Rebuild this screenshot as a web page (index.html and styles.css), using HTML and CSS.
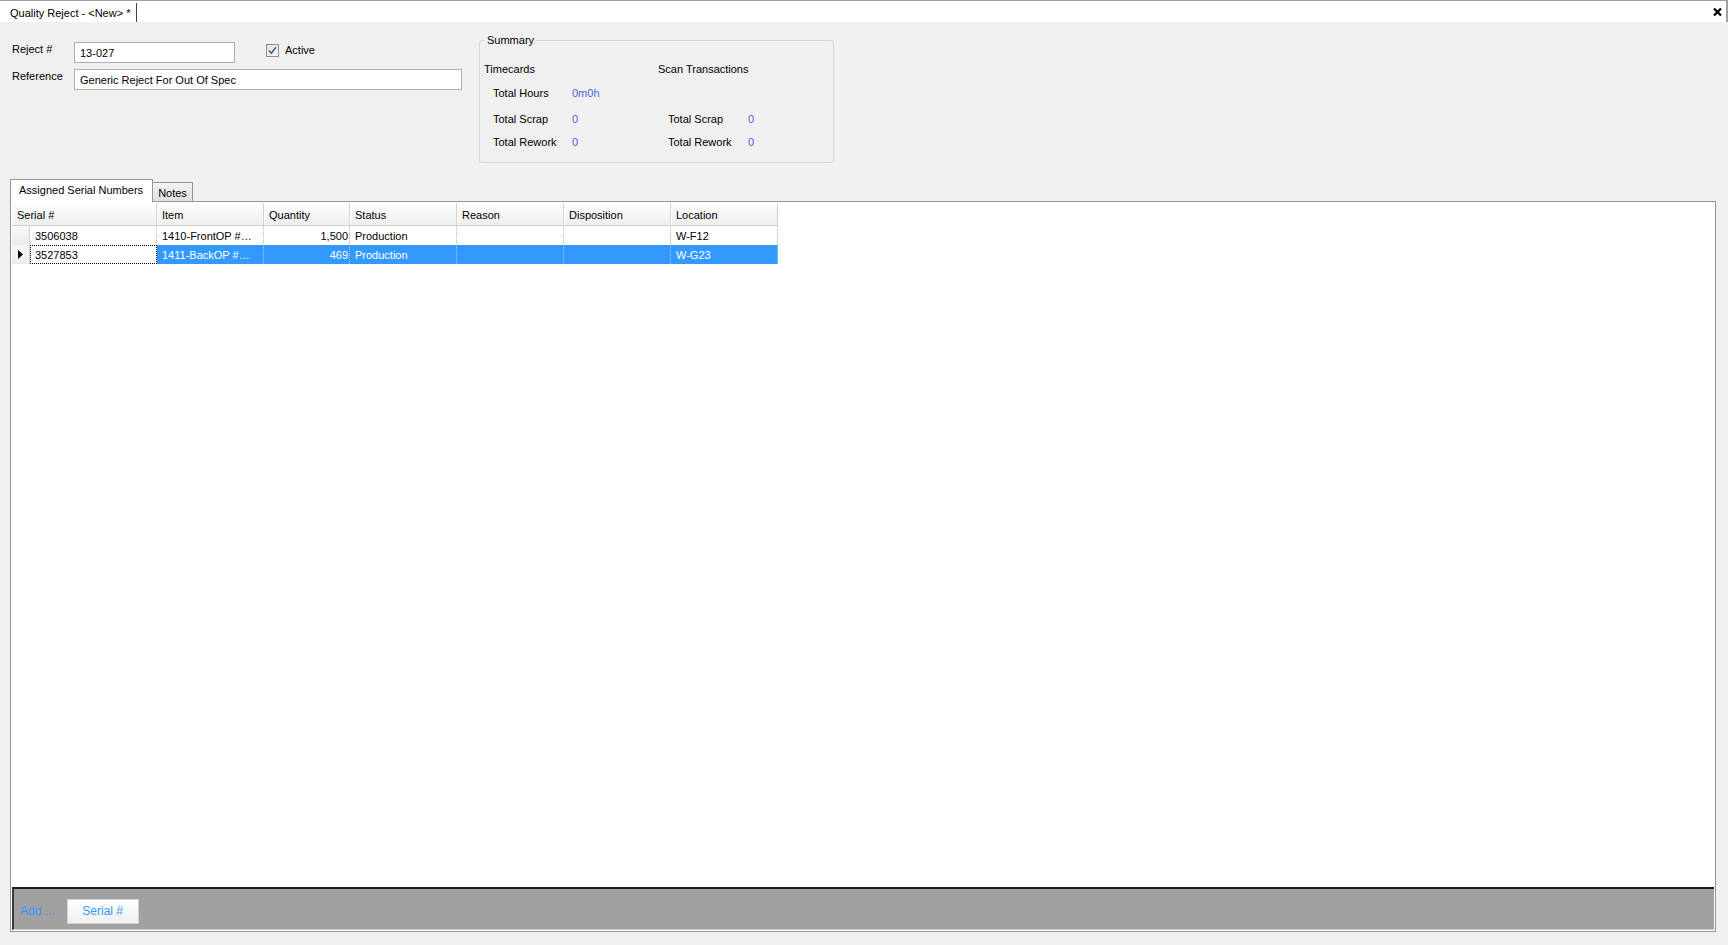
FILE: index.html
```html
<!DOCTYPE html>
<html>
<head>
<meta charset="utf-8">
<title>Quality Reject</title>
<link rel="stylesheet" href="styles.css">
</head>
<body>
<div class="window">
  <div class="titlebar">
    <div class="doc-tab">Quality Reject - &lt;New&gt; *</div>
    <div class="close">
      <svg width="9" height="8" viewBox="0 0 9 8"><path d="M1 0.5 L8 7.5 M8 0.5 L1 7.5" stroke="#000" stroke-width="2.2" fill="none"/></svg>
    </div>
  </div>

  <div class="top">
    <div class="form">
      <div class="form-row">
        <label class="field-label">Reject #</label>
        <input class="field field-short" type="text" value="13-027">
        <div class="check">
          <span class="checkbox">
            <svg width="13" height="13" viewBox="0 0 13 13">
              <defs><linearGradient id="cbg" x1="0" y1="0" x2="1" y2="1"><stop offset="0" stop-color="#dcdcdc"/><stop offset="1" stop-color="#fbfbfb"/></linearGradient></defs>
              <rect x="0.5" y="0.5" width="12" height="12" fill="url(#cbg)" stroke="#8f8f8f"/>
              <path d="M3 6.5 L5.3 9.2 L10 3.2" stroke="#4a5e8c" stroke-width="1.6" fill="none"/>
            </svg>
          </span>
          <span class="check-text">Active</span>
        </div>
      </div>
      <div class="form-row">
        <label class="field-label">Reference</label>
        <input class="field field-long" type="text" value="Generic Reject For Out Of Spec">
      </div>
    </div>

    <fieldset class="summary">
      <legend>Summary</legend>
      <div class="summary-cols">
        <div class="sum-col sum-col-left">
          <div class="sum-head">Timecards</div>
          <div class="sum-row r-hours"><span class="sum-label">Total Hours</span><span class="sum-val">0m0h</span></div>
          <div class="sum-row r-scrap"><span class="sum-label">Total Scrap</span><span class="sum-val">0</span></div>
          <div class="sum-row r-rework"><span class="sum-label">Total Rework</span><span class="sum-val">0</span></div>
        </div>
        <div class="sum-col sum-col-right">
          <div class="sum-head">Scan Transactions</div>
          <div class="sum-row r-hours"></div>
          <div class="sum-row r-scrap"><span class="sum-label">Total Scrap</span><span class="sum-val">0</span></div>
          <div class="sum-row r-rework"><span class="sum-label">Total Rework</span><span class="sum-val">0</span></div>
        </div>
      </div>
    </fieldset>
  </div>

  <div class="tabs">
    <div class="tab tab-active">Assigned Serial Numbers</div>
    <div class="tab tab-inactive">Notes</div>
  </div>

  <div class="panel">
    <div class="grid-area">
      <div class="grid">
        <div class="gh gh-first">Serial #</div>
        <div class="gh">Item</div>
        <div class="gh">Quantity</div>
        <div class="gh">Status</div>
        <div class="gh">Reason</div>
        <div class="gh">Disposition</div>
        <div class="gh">Location</div>

        <div class="rh"></div>
        <div class="gc gc-serial">3506038</div>
        <div class="gc">1410-FrontOP #…</div>
        <div class="gc num">1,500</div>
        <div class="gc">Production</div>
        <div class="gc"></div>
        <div class="gc"></div>
        <div class="gc">W-F12</div>

        <div class="rh rh-current">
          <svg width="5" height="9" viewBox="0 0 5 9"><path d="M0 0 L5 4.5 L0 9 Z" fill="#000"/></svg>
        </div>
        <div class="gc gc-serial focus">3527853</div>
        <div class="gc sel">1411-BackOP #…</div>
        <div class="gc sel num">469</div>
        <div class="gc sel">Production</div>
        <div class="gc sel"></div>
        <div class="gc sel"></div>
        <div class="gc sel">W-G23</div>
      </div>
    </div>
    <div class="toolbar">
      <span class="add-label">Add ...</span>
      <button class="tb-btn" type="button">Serial #</button>
    </div>
  </div>
</div>
</body>
</html>
```

FILE: styles.css
```css
html, body {
  margin: 0;
  padding: 0;
}

body {
  background: #f0f0f0;
  font-family: "Liberation Sans", Arial, sans-serif;
  font-size: 11px;
  color: #000;
}

.window {
  width: 1728px;
  height: 945px;
  overflow: hidden;
}

/* ---------- title strip ---------- */
.titlebar {
  height: 22px;
  box-sizing: border-box;
  border-top: 1px solid #a0a0a0;
  border-right: 2px solid #a0a0a0;
  background: #fff;
  display: flex;
  justify-content: space-between;
  align-items: flex-start;
}

.doc-tab {
  margin-top: 2px;
  height: 19px;
  line-height: 20px;
  padding: 0 6px 0 10px;
  border-right: 1px solid #404040;
  white-space: nowrap;
}

.close {
  margin: 7px 4px 0 0;
  width: 9px;
  height: 8px;
}

.close svg {
  display: block;
}

/* ---------- top form area ---------- */
.top {
  height: 157px;
  display: flex;
  align-items: flex-start;
}

.form {
  width: 450px;
  padding: 20px 0 0 12px;
}

.form-row {
  display: flex;
  align-items: flex-start;
}

.form-row + .form-row {
  margin-top: 6px;
}

.field-label {
  width: 62px;
  line-height: 14px;
  flex: none;
}

.field {
  height: 21px;
  box-sizing: border-box;
  border: 1px solid #abadb3;
  margin: 0;
  padding: 0 0 0 5px;
  font: inherit;
  color: #000;
  background: #fff;
  outline: none;
}

.field-short {
  width: 161px;
}

.field-long {
  width: 388px;
}

.check {
  display: flex;
  align-items: center;
  gap: 6px;
  margin: 1px 0 0 31px;
}

.checkbox {
  width: 13px;
  height: 13px;
}

.checkbox svg {
  display: block;
}

.check-text {
  line-height: 14px;
}

/* ---------- summary group ---------- */
.summary {
  margin: 11px 0 0 17px;
  width: 355px;
  box-sizing: border-box;
  border: 1px solid #d7d7d7;
  border-radius: 3px;
  padding: 15px 0 13px 4px;
}

.summary legend {
  margin-left: 1px;
  padding: 0 2px;
  line-height: 14px;
}

.summary-cols {
  display: flex;
}

.sum-col-left {
  width: 174px;
}

.sum-head {
  line-height: 14px;
  height: 14px;
}

.sum-row {
  display: flex;
  height: 14px;
  line-height: 14px;
}

.sum-col-left .sum-row {
  padding-left: 9px;
}

.sum-col-left .sum-label {
  width: 79px;
}

.sum-col-right .sum-row {
  padding-left: 10px;
}

.sum-col-right .sum-label {
  width: 80px;
}

.r-hours {
  margin-top: 10px;
}

.r-scrap {
  margin-top: 12px;
}

.r-rework {
  margin-top: 9px;
}

.sum-val {
  color: #4c66d8;
}

/* ---------- tabs ---------- */
.tabs {
  display: flex;
  align-items: flex-end;
  height: 22px;
  margin-left: 10px;
}

.tab {
  box-sizing: border-box;
  border: 1px solid #8e97a6;
  border-bottom: none;
  white-space: nowrap;
}

.tab-active {
  width: 143px;
  height: 23px;
  margin-bottom: -1px;
  padding-left: 8px;
  line-height: 20px;
  background: #fff;
  position: relative;
  z-index: 1;
}

.tab-inactive {
  width: 40px;
  height: 19px;
  border-left: none;
  text-align: center;
  line-height: 20px;
  background: linear-gradient(#f3f3f3, #dfdfdf);
}

/* ---------- panel ---------- */
.panel {
  margin-left: 10px;
  width: 1706px;
  height: 731px;
  box-sizing: border-box;
  border: 1px solid #8e97a6;
  padding: 1px;
  background: #fff;
  display: flex;
  flex-direction: column;
}

.grid-area {
  flex: 1;
  background: #fff;
}

.grid {
  display: grid;
  grid-template-columns: 18px 127px 107px 86px 107px 107px 107px 107px;
  width: 766px;
}

.gh {
  height: 23px;
  box-sizing: border-box;
  line-height: 24px;
  padding-left: 5px;
  background: linear-gradient(#fdfdfd, #eeeeee);
  border-right: 1px solid #d2d2d2;
  border-bottom: 1px solid #d2d2d2;
  box-shadow: inset 1px 0 0 #ffffff;
  white-space: nowrap;
}

.gh-first {
  grid-column: span 2;
}

.rh {
  height: 19px;
  box-sizing: border-box;
  background: linear-gradient(#f8f8f8, #ebebeb);
  border-right: 1px solid #d2d2d2;
  display: flex;
  align-items: center;
  padding-left: 6px;
}

.rh svg {
  display: block;
}

.gc {
  height: 19px;
  box-sizing: border-box;
  line-height: 20px;
  padding: 0 1px 0 5px;
  border-right: 1px dotted #b8b8b8;
  white-space: nowrap;
  overflow: hidden;
}

.gc-serial {
  padding-left: 5px;
}

.focus {
  border: 1px dotted #000;
  padding-left: 4px;
  line-height: 18px;
}

.num {
  text-align: right;
}

.sel {
  background: #3399ff;
  color: #fff;
  border-right-color: #a6cffb;
}

/* ---------- bottom toolbar ---------- */
.toolbar {
  height: 43px;
  box-sizing: border-box;
  background: #a0a0a0;
  border-top: 2px solid #1c1c1c;
  border-left: 2px solid #3a3a3a;
  border-bottom: 1px solid #c8ccd2;
  display: flex;
  align-items: center;
  padding: 4px 0 0 6px;
}

.add-label {
  color: #3399ff;
  font-size: 12px;
}

.tb-btn {
  margin-left: 12px;
  width: 72px;
  height: 25px;
  box-sizing: border-box;
  border: 1px solid #d3d3d3;
  background: linear-gradient(#ffffff, #efefef);
  color: #3399ff;
  font-family: "Liberation Sans", Arial, sans-serif;
  font-size: 12px;
  padding: 0;
}
```
